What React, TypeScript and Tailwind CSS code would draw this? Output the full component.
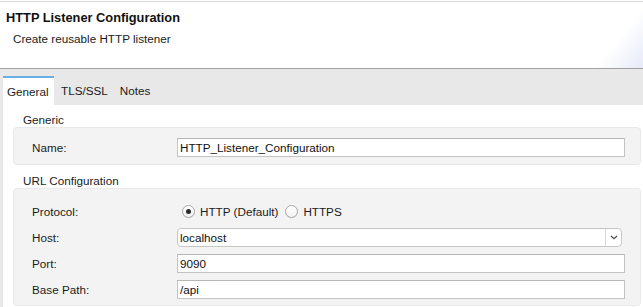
import React from 'react';

const Radio = ({ checked, label }: { checked?: boolean; label: string }) => (
  <label className="flex items-center">
    <span className="w-[13px] h-[13px] rounded-full border border-[#a9a9a9] bg-[linear-gradient(#ffffff,#f1f1f1)] flex items-center justify-center shadow-[0_0.5px_0.5px_rgba(0,0,0,0.08)]">
      {checked && <span className="w-[5px] h-[5px] rounded-full bg-[#2b2b2b]" />}
    </span>
    <span className="ml-[5px]">{label}</span>
  </label>
);

const Field = ({ value }: { value: string }) => (
  <div className="flex-1 h-[19px] border border-[#c3c3c3] border-t-[#b5b5b5] bg-white pl-[2px] flex items-center text-[#111]">
    {value}
  </div>
);

const Row = ({ label, children }: { label: string; children: React.ReactNode }) => (
  <div className="flex items-center h-[19px]">
    <div className="w-[145px] shrink-0">{label}</div>
    {children}
  </div>
);

export default function App() {
  return (
    <div
      className="w-[643px] h-[307px] overflow-hidden bg-white text-[11.7px] text-[#1b1b1b] leading-[15px]"
      style={{ fontFamily: '"Liberation Sans", Arial, sans-serif' }}
    >
      {/* Header */}
      <div className="mt-px h-[68px] border-t border-b border-t-[#d6d6d6] border-b-[#a2a2a2] bg-[linear-gradient(129deg,#ffffff_93%,#e6eaf8_100%)]">
        <div className="pt-[8px] pl-[6px] text-[12.8px] font-bold text-[#111]">HTTP Listener Configuration</div>
        <div className="mt-[6px] pl-[13px]">Create reusable HTTP listener</div>
      </div>

      <div className="bg-[#e8e8e8] pl-[3px] h-full">
        {/* Tabs */}
        <div className="flex pt-[7px] h-[36px]">
          <div className="w-[51px] h-[29px] bg-white border-t-2 border-[#6aafe2] pl-[4px] flex items-center">General</div>
          <div className="h-[29px] pl-[7px] flex items-center">TLS/SSL</div>
          <div className="h-[29px] pl-[12px] flex items-center">Notes</div>
        </div>

        {/* Content */}
        <div className="bg-white h-full pl-[10px] pr-[2px]">
          <div className="pt-[7px] pl-[10px]">Generic</div>
          <div className="h-[38px] rounded-[4px] bg-[#f3f3f3] border border-[#e9e9e9] pt-[10px] pl-[18px] pr-[15px]">
            <Row label="Name:">
              <Field value="HTTP_Listener_Configuration" />
            </Row>
          </div>

          <div className="pt-[8px] pl-[10px]">URL Configuration</div>
          <div className="rounded-[4px] bg-[#f3f3f3] border border-[#e9e9e9] pt-[13px] pb-[6px] pl-[18px] pr-[15px] flex flex-col gap-[7px]">
            <Row label="Protocol:">
              <div className="flex items-center pl-[5px] gap-[7px]">
                <Radio checked label="HTTP (Default)" />
                <Radio label="HTTPS" />
              </div>
            </Row>
            <Row label="Host:">
              <div className="flex-1 mr-[3px] h-[19px] rounded-[4px] border border-[#c6c6c6] bg-white flex items-center">
                <div className="flex-1 pl-[2px] text-[#111]">localhost</div>
                <div className="w-[16px] h-full border-l border-[#d6d6d6] flex items-center justify-center">
                  <svg width="8" height="5" viewBox="0 0 8 5">
                    <path d="M1 1l3 2.8L7 1" fill="none" stroke="#4a4a4a" strokeWidth="1.2" />
                  </svg>
                </div>
              </div>
            </Row>
            <Row label="Port:">
              <Field value="9090" />
            </Row>
            <Row label="Base Path:">
              <Field value="/api" />
            </Row>
          </div>
        </div>
      </div>
    </div>
  );
}
